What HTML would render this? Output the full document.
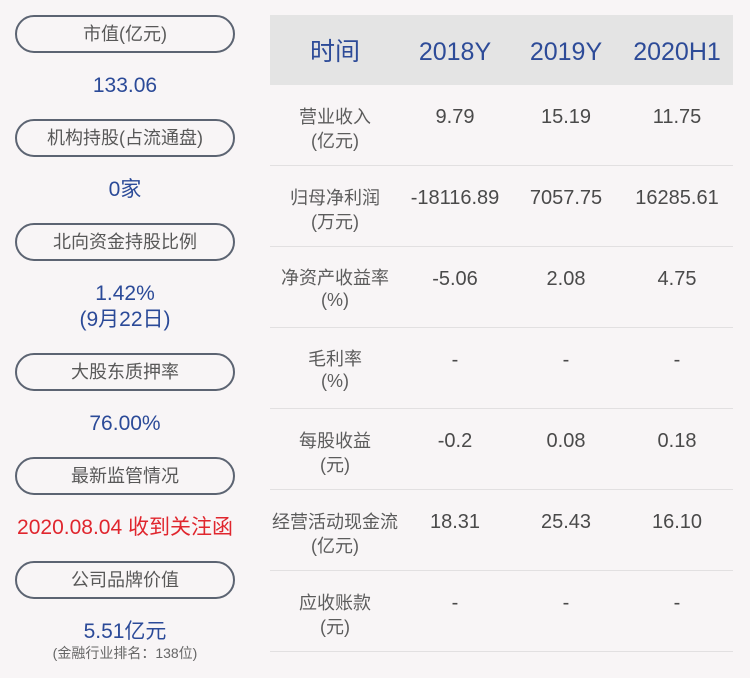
<!DOCTYPE html>
<html><head><meta charset="utf-8"><style>
*{margin:0;padding:0;box-sizing:border-box}
body{width:750px;height:678px;background:#f8f5f6;font-family:"Liberation Sans","Noto Sans CJK SC",sans-serif;position:relative;overflow:hidden}
.pill{position:absolute;left:15px;width:220px;height:38px;border:2px solid #5c6472;border-radius:19px;text-align:center;line-height:34px;font-size:18px;color:#585858}
.v{position:absolute;left:0;width:250px;text-align:center;font-size:21px;color:#2b4a98;line-height:24px}
.hdr{position:absolute;left:270px;top:15px;width:463px;height:70px;background:#e4e4e4}
.h{position:absolute;top:17px;height:70px;line-height:70px;text-align:center;font-size:25px;color:#2d4b98;width:120px}
.row{position:absolute;left:270px;width:463px;height:81px;border-bottom:1px solid #e2e0e1}
.lab{position:absolute;left:0;width:130px;top:20px;text-align:center;font-size:18px;line-height:24px;color:#5c5c5c}
.c{position:absolute;top:20px;width:120px;text-align:center;font-size:20px;line-height:24px;color:#4a4a4a}
</style></head><body>
<div class="pill" style="top:15px">市值(亿元)</div>
<div class="v" style="top:74px">133.06</div>
<div class="pill" style="top:119px">机构持股(占流通盘)</div>
<div class="v" style="top:178px">0家</div>
<div class="pill" style="top:223px">北向资金持股比例</div>
<div class="v" style="top:282px">1.42%</div>
<div class="v" style="top:308px">(9月22日)</div>
<div class="pill" style="top:353px">大股东质押率</div>
<div class="v" style="top:412px">76.00%</div>
<div class="pill" style="top:457px">最新监管情况</div>
<div class="v" style="top:516px;color:#e0262e">2020.08.04 收到关注函</div>
<div class="pill" style="top:561px">公司品牌价值</div>
<div class="v" style="top:620px">5.51亿元</div>
<div class="v" style="top:643px;font-size:14px;color:#666;line-height:20px">(金融行业排名：138位)</div>

<div class="hdr"></div>
<div class="h" style="left:275px">时间</div>
<div class="h" style="left:395px">2018Y</div>
<div class="h" style="left:506px">2019Y</div>
<div class="h" style="left:617px">2020H1</div>

<div class="row" style="top:85px"><div class="lab">营业收入<br>(亿元)</div><div class="c" style="left:125px">9.79</div><div class="c" style="left:236px">15.19</div><div class="c" style="left:347px">11.75</div></div>
<div class="row" style="top:166px"><div class="lab">归母净利润<br>(万元)</div><div class="c" style="left:125px">-18116.89</div><div class="c" style="left:236px">7057.75</div><div class="c" style="left:347px">16285.61</div></div>
<div class="row" style="top:247px"><div class="lab" style="top:20px;line-height:22px">净资产收益率<br>(%)</div><div class="c" style="left:125px">-5.06</div><div class="c" style="left:236px">2.08</div><div class="c" style="left:347px">4.75</div></div>
<div class="row" style="top:328px"><div class="lab" style="top:20px;line-height:22px">毛利率<br>(%)</div><div class="c" style="left:125px">-</div><div class="c" style="left:236px">-</div><div class="c" style="left:347px">-</div></div>
<div class="row" style="top:409px"><div class="lab">每股收益<br>(元)</div><div class="c" style="left:125px">-0.2</div><div class="c" style="left:236px">0.08</div><div class="c" style="left:347px">0.18</div></div>
<div class="row" style="top:490px"><div class="lab">经营活动现金流<br>(亿元)</div><div class="c" style="left:125px">18.31</div><div class="c" style="left:236px">25.43</div><div class="c" style="left:347px">16.10</div></div>
<div class="row" style="top:571px"><div class="lab">应收账款<br>(元)</div><div class="c" style="left:125px">-</div><div class="c" style="left:236px">-</div><div class="c" style="left:347px">-</div></div>
</body></html>
